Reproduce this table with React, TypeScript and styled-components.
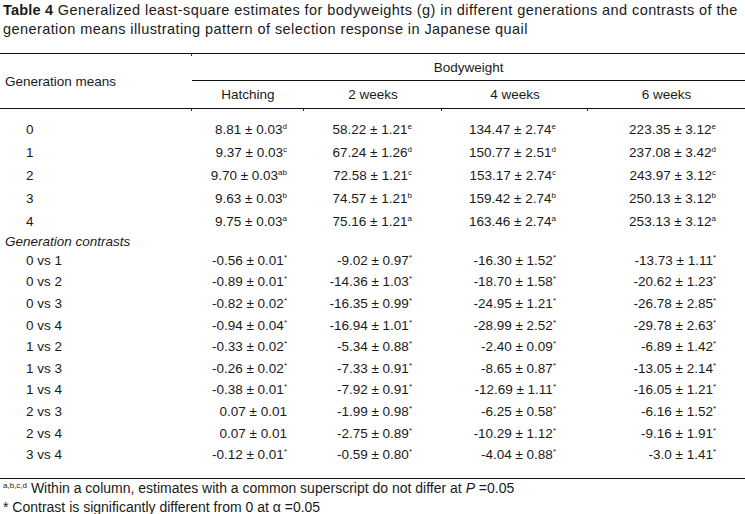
import styled, { createGlobalStyle } from 'styled-components'

const GlobalStyle = createGlobalStyle`
  html, body {
    margin: 0;
    padding: 0;
    background: #ffffff;
  }
  body {
    font-family: 'Liberation Sans', Arial, sans-serif;
    color: #1a1a1a;
  }
`

const Page = styled.div`
  width: 745px;
  height: 514px;
  overflow: hidden;
  background: #fff;
`

const Caption = styled.div`
  padding: 1px 0 0 3px;
  font-size: 14.5px;
  line-height: 19px;
  letter-spacing: 0.42px;
  white-space: nowrap;
`

const CaptionLabel = styled.b`
  font-weight: 700;
  letter-spacing: 0.2px;
`

const Table = styled.table`
  margin-top: 14px;
  width: 745px;
  border-collapse: collapse;
  table-layout: fixed;
  font-size: 13.5px;
  border-top: 1px solid #111;
`

const HeadCell = styled.th<{ $rule?: boolean; $pad?: number }>`
  position: relative;
  font-weight: 400;
  text-align: center;
  padding: 0;
  height: ${({ $pad }) => ($pad ? $pad : 26)}px;
  vertical-align: middle;
  border-bottom: ${({ $rule }) => ($rule ? '1px solid #111' : 'none')};
`

const SideHead = styled.th`
  position: relative;
  font-weight: 400;
  text-align: left;
  padding: 0 0 0 5px;
  vertical-align: middle;
  border-bottom: 1px solid #111;
`

const Tick = styled.span<{ $top?: boolean }>`
  position: absolute;
  left: -1px;
  ${({ $top }) => ($top ? 'top: 0;' : 'bottom: -3px;')}
  width: 1px;
  height: 2px;
  background: #333;
`

const Row = styled.tr<{ $h: number }>`
  height: ${({ $h }) => $h}px;
`

const Label = styled.td<{ $italic?: boolean }>`
  padding: 0 0 0 ${({ $italic }) => ($italic ? 5 : 26)}px;
  font-style: ${({ $italic }) => ($italic ? 'italic' : 'normal')};
  white-space: nowrap;
`

const Value = styled.td<{ $right: number }>`
  padding: 0 ${({ $right }) => $right}px 0 0;
  text-align: right;
  white-space: nowrap;
`

const Sup = styled.sup`
  font-size: 8px;
  line-height: 0;
  vertical-align: 5px;
`

const Spacer = styled.tr<{ $h: number }>`
  height: ${({ $h }) => $h}px;
`

const Footer = styled.div`
  border-top: 1px solid #111;
  font-size: 14px;
  line-height: 19px;
  padding-left: 3px;
`

const FootSup = styled.sup`
  font-size: 8px;
  line-height: 0;
  vertical-align: 5px;
`

const pads = [17, 30, 32, 29]

type Cell = [string, string]

const means: { label: string; cells: Cell[] }[] = [
  { label: '0', cells: [['8.81 ± 0.03', 'd'], ['58.22 ± 1.21', 'e'], ['134.47 ± 2.74', 'e'], ['223.35 ± 3.12', 'e']] },
  { label: '1', cells: [['9.37 ± 0.03', 'c'], ['67.24 ± 1.26', 'd'], ['150.77 ± 2.51', 'd'], ['237.08 ± 3.42', 'd']] },
  { label: '2', cells: [['9.70 ± 0.03', 'ab'], ['72.58 ± 1.21', 'c'], ['153.17 ± 2.74', 'c'], ['243.97 ± 3.12', 'c']] },
  { label: '3', cells: [['9.63 ± 0.03', 'b'], ['74.57 ± 1.21', 'b'], ['159.42 ± 2.74', 'b'], ['250.13 ± 3.12', 'b']] },
  { label: '4', cells: [['9.75 ± 0.03', 'a'], ['75.16 ± 1.21', 'a'], ['163.46 ± 2.74', 'a'], ['253.13 ± 3.12', 'a']] }
]

const contrasts: { label: string; cells: Cell[] }[] = [
  { label: '0 vs 1', cells: [['-0.56 ± 0.01', '*'], ['-9.02 ± 0.97', '*'], ['-16.30 ± 1.52', '*'], ['-13.73 ± 1.11', '*']] },
  { label: '0 vs 2', cells: [['-0.89 ± 0.01', '*'], ['-14.36 ± 1.03', '*'], ['-18.70 ± 1.58', '*'], ['-20.62 ± 1.23', '*']] },
  { label: '0 vs 3', cells: [['-0.82 ± 0.02', '*'], ['-16.35 ± 0.99', '*'], ['-24.95 ± 1.21', '*'], ['-26.78 ± 2.85', '*']] },
  { label: '0 vs 4', cells: [['-0.94 ± 0.04', '*'], ['-16.94 ± 1.01', '*'], ['-28.99 ± 2.52', '*'], ['-29.78 ± 2.63', '*']] },
  { label: '1 vs 2', cells: [['-0.33 ± 0.02', '*'], ['-5.34 ± 0.88', '*'], ['-2.40 ± 0.09', '*'], ['-6.89 ± 1.42', '*']] },
  { label: '1 vs 3', cells: [['-0.26 ± 0.02', '*'], ['-7.33 ± 0.91', '*'], ['-8.65 ± 0.87', '*'], ['-13.05 ± 2.14', '*']] },
  { label: '1 vs 4', cells: [['-0.38 ± 0.01', '*'], ['-7.92 ± 0.91', '*'], ['-12.69 ± 1.11', '*'], ['-16.05 ± 1.21', '*']] },
  { label: '2 vs 3', cells: [['0.07 ± 0.01', ''], ['-1.99 ± 0.98', '*'], ['-6.25 ± 0.58', '*'], ['-6.16 ± 1.52', '*']] },
  { label: '2 vs 4', cells: [['0.07 ± 0.01', ''], ['-2.75 ± 0.89', '*'], ['-10.29 ± 1.12', '*'], ['-9.16 ± 1.91', '*']] },
  { label: '3 vs 4', cells: [['-0.12 ± 0.01', '*'], ['-0.59 ± 0.80', '*'], ['-4.04 ± 0.88', '*'], ['-3.0 ± 1.41', '*']] }
]

const DataRow = ({ label, cells, h }: { label: string; cells: Cell[]; h: number }) => (
  <Row $h={h}>
    <Label>{label}</Label>
    {cells.map(([v, s], i) => (
      <Value key={i} $right={pads[i]}>
        {v}
        {s && <Sup>{s}</Sup>}
      </Value>
    ))}
  </Row>
)

const App = () => {
  return (
    <Page>
      <GlobalStyle />
      <Caption>
        <CaptionLabel>Table 4</CaptionLabel> Generalized least-square estimates for bodyweights (g) in
        different generations and contrasts of the
        <br />
        generation means illustrating pattern of selection response in Japanese quail
      </Caption>
      <Table>
        <colgroup>
          <col style={{ width: 192 }} />
          <col style={{ width: 112 }} />
          <col style={{ width: 138 }} />
          <col style={{ width: 146 }} />
          <col style={{ width: 157 }} />
        </colgroup>
        <thead>
          <tr>
            <SideHead rowSpan={2}>Generation means</SideHead>
            <HeadCell colSpan={4} $rule $pad={26}>
              <Tick $top />
              Bodyweight
            </HeadCell>
          </tr>
          <tr>
            <HeadCell $rule $pad={27}>
              <Tick />
              Hatching
            </HeadCell>
            <HeadCell $rule $pad={27}>
              <Tick />
              2 weeks
            </HeadCell>
            <HeadCell $rule $pad={27}>
              <Tick />
              4 weeks
            </HeadCell>
            <HeadCell $rule $pad={27}>
              <Tick />
              6 weeks
            </HeadCell>
          </tr>
        </thead>
        <tbody>
          <Spacer $h={9} />
          {means.map((r) => (
            <DataRow key={r.label} label={r.label} cells={r.cells} h={23} />
          ))}
          <Row $h={17}>
            <Label $italic colSpan={5}>
              Generation contrasts
            </Label>
          </Row>
          {contrasts.map((r) => (
            <DataRow key={r.label} label={r.label} cells={r.cells} h={21.6} />
          ))}
          <Spacer $h={13} />
        </tbody>
      </Table>
      <Footer>
        <div>
          <FootSup>a,b,c,d</FootSup> Within a column, estimates with a common superscript do not differ at{' '}
          <i>P</i> =0.05
        </div>
        <div>* Contrast is significantly different from 0 at α =0.05</div>
      </Footer>
    </Page>
  )
}

export default App
